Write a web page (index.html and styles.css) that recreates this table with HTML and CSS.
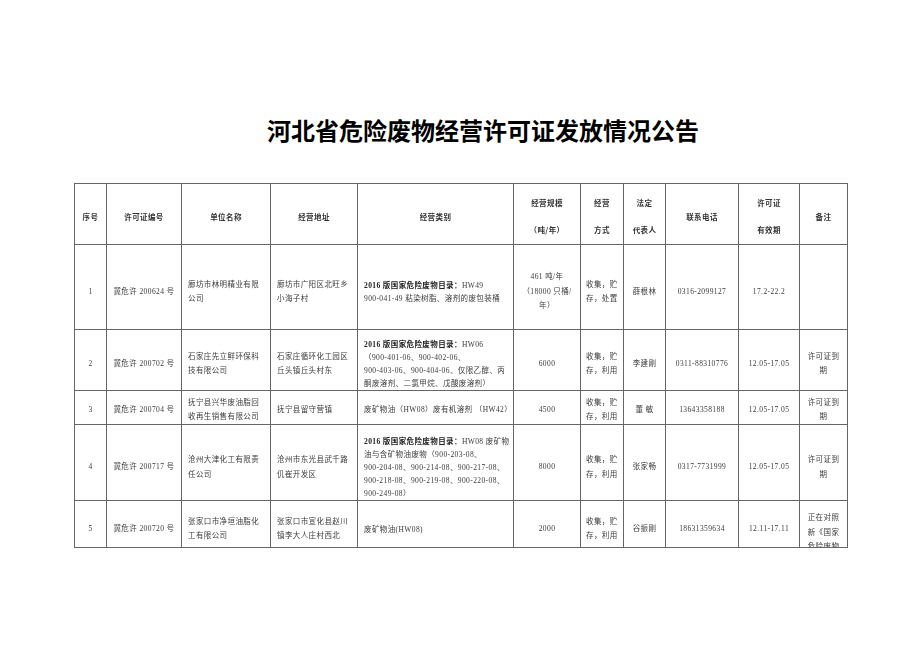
FILE: index.html
```html
<!DOCTYPE html>
<html lang="zh-CN">
<head>
<meta charset="utf-8">
<title>河北省危险废物经营许可证发放情况公告</title>
<link rel="stylesheet" href="styles.css">
</head>
<body>
<h1 class="title">河北省危险废物经营许可证发放情况公告</h1>
<table class="permits">
  <colgroup>
    <col class="c1"><col class="c2"><col class="c3"><col class="c4"><col class="c5"><col class="c6"><col class="c7"><col class="c8"><col class="c9"><col class="c10"><col class="c11">
  </colgroup>
  <tr class="head">
    <th>序号</th>
    <th>许可证编号</th>
    <th>单位名称</th>
    <th>经营地址</th>
    <th>经营类别</th>
    <th>经营规模<br>（吨/年）</th>
    <th>经营<br>方式</th>
    <th>法定<br>代表人</th>
    <th>联系电话</th>
    <th>许可证<br>有效期</th>
    <th>备注</th>
  </tr>
  <tr class="r1">
    <td>1</td>
    <td>冀危许 200624 号</td>
    <td class="l">廊坊市林明精业有限<br>公司</td>
    <td class="l">廊坊市广阳区北旺乡<br>小海子村</td>
    <td class="l cat"><b>2016 版国家危险废物目录：</b>HW49<br>900-041-49 粘染树脂、溶剂的废包装桶</td>
    <td>461 吨/年<br>（18000 只桶/<br>年）</td>
    <td class="l way">收集，贮<br>存，处置</td>
    <td>薛根林</td>
    <td>0316-2099127</td>
    <td>17.2-22.2</td>
    <td></td>
  </tr>
  <tr class="r2">
    <td>2</td>
    <td>冀危许 200702 号</td>
    <td class="l">石家庄先立鲜环保科<br>技有限公司</td>
    <td class="l">石家庄循环化工园区<br>丘头镇丘头村东</td>
    <td class="l cat"><b>2016 版国家危险废物目录：</b>HW06<br>（900-401-06、900-402-06、<br>900-403-06、900-404-06、仅限乙醇、丙<br>酮废溶剂、二氯甲烷、戊酸废溶剂）</td>
    <td>6000</td>
    <td class="l way">收集，贮<br>存，利用</td>
    <td>李建刚</td>
    <td>0311-88310776</td>
    <td>12.05-17.05</td>
    <td>许可证到<br>期</td>
  </tr>
  <tr class="r3">
    <td>3</td>
    <td>冀危许 200704 号</td>
    <td class="l">抚宁县兴华废油脂回<br>收再生销售有限公司</td>
    <td class="l">抚宁县留守营镇</td>
    <td class="l cat">废矿物油（HW08）废有机溶剂 （HW42）</td>
    <td>4500</td>
    <td class="l way">收集，贮<br>存，利用</td>
    <td>董 敏</td>
    <td>13643358188</td>
    <td>12.05-17.05</td>
    <td>许可证到<br>期</td>
  </tr>
  <tr class="r4">
    <td>4</td>
    <td>冀危许 200717 号</td>
    <td class="l">沧州大津化工有限责<br>任公司</td>
    <td class="l">沧州市东光县武千路<br>仉崔开发区</td>
    <td class="l cat"><b>2016 版国家危险废物目录：</b>HW08 废矿物<br>油与含矿物油废物（900-203-08、<br>900-204-08、900-214-08、900-217-08、<br>900-218-08、900-219-08、900-220-08、<br>900-249-08）</td>
    <td>8000</td>
    <td class="l way">收集，贮<br>存，利用</td>
    <td>张家畅</td>
    <td>0317-7731999</td>
    <td>12.05-17.05</td>
    <td>许可证到<br>期</td>
  </tr>
  <tr class="r5">
    <td>5</td>
    <td>冀危许 200720 号</td>
    <td class="l">张家口市净垣油脂化<br>工有限公司</td>
    <td class="l">张家口市宣化县赵川<br>镇李大人庄村西北</td>
    <td class="l cat">废矿物油(HW08)</td>
    <td>2000</td>
    <td class="l way">收集，贮<br>存，利用</td>
    <td>谷振刚</td>
    <td>18631359634</td>
    <td>12.11-17.11</td>
    <td class="clip"><div class="clip-box">正在对照<br>新《国家<br>危险废物<br>名录》</div></td>
  </tr>
</table>
</body>
</html>
```
FILE: styles.css
```css
html, body {
  margin: 0;
  padding: 0;
  background: #fff;
}

body {
  font-family: "Liberation Serif", "Noto Sans CJK SC", serif;
  color: #3a3a3a;
}

.title {
  margin: 115px 0 0;
  padding-left: 46px;
  text-align: center;
  font-family: "Noto Sans CJK SC", sans-serif;
  font-weight: 700;
  font-size: 24px;
  line-height: 30px;
  color: #000;
}

.permits {
  margin: 38px 0 0 74px;
  width: 773px;
  border-collapse: collapse;
  table-layout: fixed;
  font-size: 7.5px;
  letter-spacing: 0.4px;
  filter: grayscale(1);
}

.c1 { width: 32px; }
.c2 { width: 75px; }
.c3 { width: 89px; }
.c4 { width: 87px; }
.c5 { width: 156px; }
.c6 { width: 67px; }
.c7 { width: 43px; }
.c8 { width: 42px; }
.c9 { width: 73px; }
.c10 { width: 61px; }
.c11 { width: 48px; }

.permits th,
.permits td {
  border: 1px solid #666;
  padding: 10px 3px 0;
  vertical-align: middle;
  text-align: center;
  white-space: nowrap;
  line-height: 14.5px;
}

.permits th {
  font-family: "Noto Sans CJK SC", sans-serif;
  font-weight: 700;
  color: #333;
  padding-top: 4px;
  line-height: 27px;
}

.head { height: 61px; }
.r1 { height: 85px; }
.r2 { height: 61px; }
.r3 { height: 34px; }
.r4 { height: 75px; }
.r5 { height: 47px; }

.permits td.l {
  text-align: left;
  padding-left: 6px;
}

.permits td.cat {
  line-height: 13px;
}

.permits td.way {
  padding-left: 5px;
  line-height: 14.5px;
}

.permits .r2 td {
  padding-top: 8px;
}

.permits .r3 td {
  padding-top: 4px;
  line-height: 14px;
}

.cat b {
  font-weight: 700;
  color: #222;
}

.permits td.clip {
  padding: 0;
  vertical-align: top;
}

.clip-box {
  height: 46px;
  overflow: hidden;
  padding-top: 10px;
  box-sizing: border-box;
  line-height: 14.5px;
}
```
